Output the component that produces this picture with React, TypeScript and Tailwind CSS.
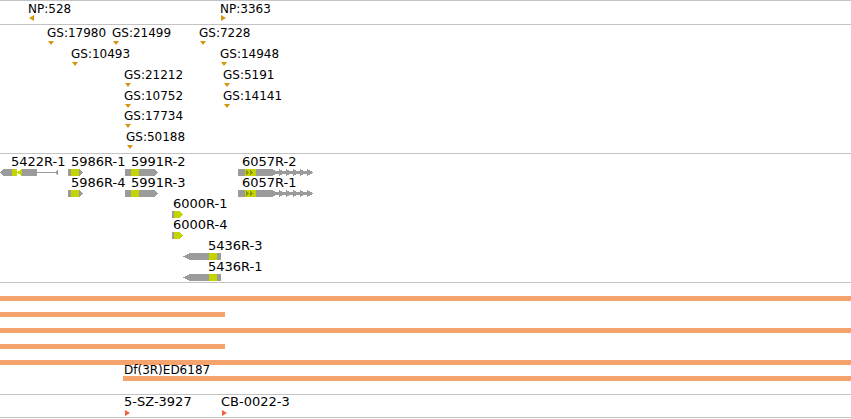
import React from "react";

// colours taken from the browser tracks
const GRAY = "#9b9b9b";
const LIME = "#c3d400";
const OLIVE = "#8c9800";
const GOLD = "#d6950f";
const RED = "#f2603a";

type Lbl = { text: string; x: number; y: number };

/* ---------- track data (page coords) ---------- */
const npLabels: Lbl[] = [
  { text: "NP:528", x: 29, y: 5 },
  { text: "NP:3363", x: 221, y: 5 },
];

const gsLabels: Lbl[] = [
  { text: "GS:17980", x: 48, y: 29 },
  { text: "GS:21499", x: 113, y: 29 },
  { text: "GS:7228", x: 200, y: 29 },
  { text: "GS:10493", x: 72, y: 50 },
  { text: "GS:14948", x: 221, y: 50 },
  { text: "GS:21212", x: 125, y: 71 },
  { text: "GS:5191", x: 224, y: 71 },
  { text: "GS:10752", x: 125, y: 92 },
  { text: "GS:14141", x: 224, y: 92 },
  { text: "GS:17734", x: 125, y: 112 },
  { text: "GS:50188", x: 127, y: 133 },
];

const geneLabels: Lbl[] = [
  { text: "5422R-1", x: 12, y: 157 },
  { text: "5986R-1", x: 72, y: 157 },
  { text: "5991R-2", x: 132, y: 157 },
  { text: "6057R-2", x: 243, y: 157 },
  { text: "5986R-4", x: 72, y: 178 },
  { text: "5991R-3", x: 132, y: 178 },
  { text: "6057R-1", x: 243, y: 178 },
  { text: "6000R-1", x: 174, y: 199 },
  { text: "6000R-4", x: 174, y: 220 },
  { text: "5436R-3", x: 209, y: 241 },
  { text: "5436R-1", x: 209, y: 262 },
];

const bars = [
  { x: 0, w: 851, y: 296 },
  { x: 0, w: 225, y: 312 },
  { x: 0, w: 851, y: 328 },
  { x: 0, w: 225, y: 344 },
  { x: 0, w: 851, y: 360 },
  { x: 123, w: 728, y: 376 },
];

// small = 12px labels (NP, GS, Df), big = 13px labels (transcripts, insertions)
const Label = ({ l, top, big }: { l: Lbl; top: number; big?: boolean }) => (
  <div
    className={
      big
        ? "absolute whitespace-nowrap text-[13px] leading-[14px]"
        : "absolute whitespace-nowrap"
    }
    style={{ left: l.x - 1, top: l.y - top - (big ? 2 : 3) }}
  >
    {l.text}
  </div>
);

const Tri = ({
  x,
  y,
  top,
  dir,
  color,
}: {
  x: number;
  y: number;
  top: number;
  dir: "down" | "left" | "right";
  color: string;
}) => {
  const pts =
    dir === "down" ? "0,0 6,0 3,4" : dir === "left" ? "0,3 5,0 5,6" : "0,0 5,3 0,6";
  const w = dir === "down" ? 6 : 5;
  const h = dir === "down" ? 4 : 6;
  return (
    <svg
      className="absolute"
      width={w}
      height={h}
      style={{ left: x, top: y - top }}
    >
      <polygon points={pts} fill={color} />
    </svg>
  );
};

/* gene glyph: svg with viewBox in page x */
const Gene = ({
  x0,
  x1,
  y,
  top,
  children,
}: {
  x0: number;
  x1: number;
  y: number;
  top: number;
  children: React.ReactNode;
}) => (
  <svg
    className="absolute"
    width={x1 - x0}
    height={7}
    viewBox={`${x0} 0 ${x1 - x0} 7`}
    shapeRendering="crispEdges"
    style={{ left: x0, top: y - top }}
  >
    {children}
  </svg>
);

const G5422 = ({ y, top }: { y: number; top: number }) => (
  <Gene x0={0} x1={58} y={y} top={top}>
    <polygon points="0,3.5 4,0 12,0 12,7 4,7" fill={GRAY} />
    <rect x={12} y={0} width={5} height={7} fill={LIME} />
    <polygon points="17,3.5 22,0 22,7" fill={LIME} />
    <rect x={22} y={0} width={15} height={7} fill={GRAY} />
    <rect x={37} y={3} width={18} height={1} fill={GRAY} />
    <polygon points="55,3.5 58,1 58,6" fill={GRAY} />
  </Gene>
);

const G5986 = ({ y, top }: { y: number; top: number }) => (
  <Gene x0={68} x1={83} y={y} top={top}>
    <rect x={68} y={0} width={3} height={7} fill={GRAY} />
    <rect x={71} y={0} width={8} height={7} fill={LIME} />
    <polygon points="79,0 83,3.5 79,7" fill={GRAY} />
  </Gene>
);

const G5991 = ({ y, top }: { y: number; top: number }) => (
  <Gene x0={125} x1={158} y={y} top={top}>
    <rect x={125} y={0} width={6} height={7} fill={GRAY} />
    <rect x={131} y={0} width={8} height={7} fill={LIME} />
    <rect x={139} y={0} width={15} height={7} fill={GRAY} />
    <polygon points="154,0 158,3.5 154,7" fill={GRAY} />
  </Gene>
);

const G6057 = ({ y, top }: { y: number; top: number }) => (
  <Gene x0={238} x1={315} y={y} top={top}>
    <rect x={238} y={0} width={7} height={7} fill={GRAY} />
    <rect x={245} y={0} width={11} height={7} fill={LIME} />
    <polygon points="246,1 249,3.5 246,6" fill={OLIVE} />
    <polygon points="250,1 253,3.5 250,6" fill={OLIVE} />
    <rect x={256} y={0} width={16} height={7} fill={GRAY} />
    <rect x={272} y={2} width={40} height={3} fill={GRAY} />
    {[272, 279, 286, 293, 300, 307].map((t) => (
      <polygon key={t} points={`${t},0 ${t + 6},3.5 ${t},7`} fill={GRAY} />
    ))}
  </Gene>
);

const G6000 = ({ y, top }: { y: number; top: number }) => (
  <Gene x0={172} x1={183} y={y} top={top}>
    <rect x={172} y={0} width={2} height={7} fill={GRAY} />
    <rect x={174} y={0} width={6} height={7} fill={LIME} />
    <polygon points="180,0 183,3.5 180,7" fill={LIME} />
  </Gene>
);

const G5436 = ({ y, top }: { y: number; top: number }) => (
  <Gene x0={183} x1={221} y={y} top={top}>
    <polygon points="183,3.5 190,0 209,0 209,7 190,7" fill={GRAY} />
    <rect x={209} y={0} width={8} height={7} fill={LIME} />
    <rect x={217} y={0} width={4} height={7} fill={GRAY} />
  </Gene>
);

export default function App() {
  return (
    <div className="w-[851px] h-[419px] bg-white overflow-hidden font-['DejaVu_Sans',sans-serif] text-[12px] leading-[14px] text-black">
      <div className="flex flex-col border-t border-[#c4c4c4]">
        {/* NP track */}
        <div className="relative h-[24px] border-b border-[#c4c4c4]">
          {npLabels.map((l) => (
            <Label key={l.text} l={l} top={1} />
          ))}
          <Tri x={29} y={15} top={1} dir="left" color={GOLD} />
          <Tri x={221} y={15} top={1} dir="right" color={GOLD} />
        </div>

        {/* GS track */}
        <div className="relative h-[129px] border-b border-[#c4c4c4]">
          {gsLabels.map((l) => (
            <React.Fragment key={l.text}>
              <Label l={l} top={25} />
              <Tri x={l.x} y={l.y + 12} top={25} dir="down" color={GOLD} />
            </React.Fragment>
          ))}
        </div>

        {/* transcripts */}
        <div className="relative h-[129px] border-b border-[#c4c4c4]">
          {geneLabels.map((l) => (
            <Label key={l.text} l={l} top={154} big />
          ))}
          <G5422 y={169} top={154} />
          <G5986 y={169} top={154} />
          <G5991 y={169} top={154} />
          <G6057 y={169} top={154} />
          <G5986 y={190} top={154} />
          <G5991 y={190} top={154} />
          <G6057 y={190} top={154} />
          <G6000 y={211} top={154} />
          <G6000 y={232} top={154} />
          <G5436 y={253} top={154} />
          <G5436 y={274} top={154} />
        </div>

        {/* deficiencies */}
        <div className="relative h-[112px] border-b border-[#c4c4c4]">
          {bars.map((b, i) => (
            <div
              key={i}
              className="absolute h-[5px] bg-[#f5a36d]"
              style={{ left: b.x, width: b.w, top: b.y - 283 }}
            />
          ))}
          <Label l={{ text: "Df(3R)ED6187", x: 125, y: 366 }} top={283} />
        </div>

        {/* insertions */}
        <div className="relative h-[23px] border-b border-[#c4c4c4]">
          <Label l={{ text: "5-SZ-3927", x: 125, y: 397 }} top={395} big />
          <Label l={{ text: "CB-0022-3", x: 222, y: 397 }} top={395} big />
          <Tri x={125} y={410} top={395} dir="right" color={RED} />
          <Tri x={222} y={410} top={395} dir="right" color={RED} />
        </div>
      </div>
    </div>
  );
}
